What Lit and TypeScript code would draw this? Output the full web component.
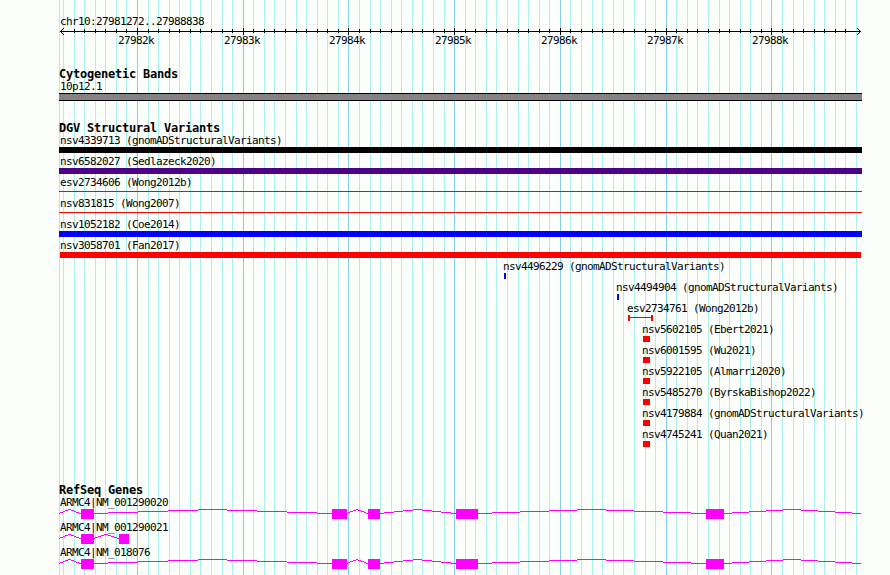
import { css, html, svg, LitElement } from 'lit';
import { customElement, property } from 'lit/decorators.js';

type Glyph = 'band' | 'bar' | 'line' | 'span';

interface Feature {
  label: string;
  left: number;
  right: number;
  color: string;
  glyph: Glyph;
  labelLeft?: number;
}

interface Gene {
  label: string;
  exons: [number, number][];
  end?: number;
}

const START = 27981272;
const STOP = 27988838;
const LEFT = 59;
const RIGHT = 862;

const BLACK = '#040204';
const PURPLE = '#4c0284';
const RED = '#ff0000';
const BLUE = '#0000ff';

/** Converts a base position to a panel pixel. */
const toPixel = (position: number) => Math.round(60 + ((position - START) * 800) / (STOP - START));

const TICKS: { x: number; position: number; major: boolean }[] = [];
for (let position = Math.ceil(START / 100) * 100; position <= STOP; position += 100) {
  TICKS.push({ x: toPixel(position), position, major: position % 1000 === 0 });
}

const BANDS: Feature[] = [
  { label: '10p12.1', left: LEFT, right: RIGHT, color: '#848284', glyph: 'band' },
];

const VARIANTS: Feature[] = [
  { label: 'nsv4339713 (gnomADStructuralVariants)', left: LEFT, right: RIGHT, color: BLACK, glyph: 'bar' },
  { label: 'nsv6582027 (Sedlazeck2020)', left: LEFT, right: RIGHT, color: PURPLE, glyph: 'bar' },
  { label: 'esv2734606 (Wong2012b)', left: LEFT, right: RIGHT, color: RED, glyph: 'line' },
  { label: 'nsv831815 (Wong2007)', left: LEFT, right: RIGHT, color: RED, glyph: 'line' },
  { label: 'nsv1052182 (Coe2014)', left: LEFT, right: RIGHT, color: BLUE, glyph: 'bar' },
  { label: 'nsv3058701 (Fan2017)', left: 60, right: 861, color: RED, glyph: 'bar' },
  { label: 'nsv4496229 (gnomADStructuralVariants)', left: 504, right: 506, color: BLUE, glyph: 'bar', labelLeft: 503 },
  { label: 'nsv4494904 (gnomADStructuralVariants)', left: 617, right: 619, color: BLUE, glyph: 'bar', labelLeft: 616 },
  { label: 'esv2734761 (Wong2012b)', left: 628, right: 653, color: RED, glyph: 'span', labelLeft: 627 },
  { label: 'nsv5602105 (Ebert2021)', left: 643, right: 650, color: RED, glyph: 'bar', labelLeft: 642 },
  { label: 'nsv6001595 (Wu2021)', left: 643, right: 650, color: RED, glyph: 'bar', labelLeft: 642 },
  { label: 'nsv5922105 (Almarri2020)', left: 643, right: 650, color: RED, glyph: 'bar', labelLeft: 642 },
  { label: 'nsv5485270 (ByrskaBishop2022)', left: 643, right: 650, color: RED, glyph: 'bar', labelLeft: 642 },
  { label: 'nsv4179884 (gnomADStructuralVariants)', left: 643, right: 650, color: RED, glyph: 'bar', labelLeft: 642 },
  { label: 'nsv4745241 (Quan2021)', left: 643, right: 650, color: RED, glyph: 'bar', labelLeft: 642 },
];

const LONG_EXONS: [number, number][] = [[81, 94], [332, 347], [368, 380], [456, 478], [706, 724]];

const GENES: Gene[] = [
  { label: 'ARMC4|NM_001290020', exons: LONG_EXONS, end: 861 },
  { label: 'ARMC4|NM_001290021', exons: [[81, 94], [119, 129]] },
  { label: 'ARMC4|NM_018076', exons: LONG_EXONS, end: 861 },
];

const textStyles = css`
  .label {
    font: 11px/13px 'DejaVu Sans Mono', monospace;
    letter-spacing: -0.622px;
    height: 13px;
    white-space: pre;
    color: #000000;
  }

  svg {
    display: block;
    shape-rendering: crispEdges;
  }
`;

/**
 * Scale bar with arrowheads, ticks and position labels.
 */
@customElement('genome-ruler')
export class GenomeRuler extends LitElement {
  static styles = [
    textStyles,
    css`
      :host {
        display: block;
      }

      .region {
        padding-left: 60px;
      }
    `,
  ];

  /** Arrowhead pixels, opening from the tip in the given direction. */
  private arrow(tip: number, direction: number) {
    return [-3, -2, -1, 1, 2, 3].map(dy => svg`
      <rect x=${tip + direction * Math.abs(dy)} y=${3 + dy} width="1" height="1" />
    `);
  }

  render() {
    // the outermost ticks give way to the arrowheads
    const ticks = TICKS.slice(1, -1);
    return html`
      <div class="label region">chr10:${START}..${STOP}</div>
      <svg width="890" height="19">
        <rect x="60" y="3" width="801" height="1" />
        ${this.arrow(60, 1)}
        ${this.arrow(860, -1)}
        ${ticks.map(({ x, position, major }) => svg`
          <rect x=${x} y=${major ? 0 : 1} width="1" height=${major ? 7 : 4} />
          ${major ? svg`<text class="label" x=${x - 19} y="16">${position / 1000}k</text>` : ''}
        `)}
      </svg>
    `;
  }
}

/**
 * One labelled feature.
 */
@customElement('genome-feature')
export class GenomeFeature extends LitElement {
  static styles = [
    textStyles,
    css`
      :host {
        display: block;
        height: 21px;
      }

      .glyph {
        box-sizing: border-box;
        height: 6px;
      }

      .band {
        height: 8px;
        border: solid #000000;
        border-width: 1px 0;
      }

      .line {
        height: 1px;
        margin-top: 2px;
      }

      .span {
        display: flex;
        align-items: flex-start;
      }

      .cap {
        width: 2px;
        height: 6px;
      }

      .stem {
        flex: 1;
        height: 1px;
        margin-top: 2px;
      }
    `,
  ];

  @property({ attribute: false }) feature!: Feature;

  render() {
    const { label, left, right, color, glyph, labelLeft = 60 } = this.feature;
    const place = `margin-left: ${left}px; width: ${right - left}px;`;
    const fill = `background: ${color}`;
    return html`
      <div class="label" style="padding-left: ${labelLeft}px">${label}</div>
      ${glyph === 'span'
        ? html`
          <div class="glyph span" style=${place}>
            <div class="cap" style=${fill}></div>
            <div class="stem" style=${fill}></div>
            <div class="cap" style=${fill}></div>
          </div>`
        : html`<div class="glyph ${glyph}" style="${place} ${fill}"></div>`}
    `;
  }
}

/**
 * Exon boxes joined by hat shaped introns.
 */
@customElement('genome-gene')
export class GenomeGene extends LitElement {
  static styles = [
    textStyles,
    css`
      :host {
        display: block;
        height: 25px;
      }

      .label {
        padding-left: 60px;
      }

      .exon,
      .intron {
        fill: #ff00ff;
      }
    `,
  ];

  @property({ attribute: false }) gene!: Gene;

  /** Climbs four pixels to the middle and back down, one flat run per level. */
  private intron(from: number, to: number) {
    const step = (to - from) / 8;
    const edges = [from];
    for (let i = 0; i < 8; i++) {
      edges.push(Math.floor(from + (i + 0.5) * step));
    }
    edges.push(to);
    return edges.slice(1).map((edge, i) => svg`
      <rect class="intron" x=${edges[i]} y=${Math.abs(4 - i)} width=${edge - edges[i]} height="1" />
    `);
  }

  render() {
    const { label, exons, end } = this.gene;
    return html`
      <div class="label">${label}</div>
      <svg width="890" height="10">
        ${exons.map(([from], i) => this.intron(i ? exons[i - 1][1] : LEFT, from))}
        ${end ? this.intron(exons[exons.length - 1][1], end) : ''}
        ${exons.map(([from, to]) => svg`<rect class="exon" x=${from} y="0" width=${to - from} height="10" />`)}
      </svg>
    `;
  }
}

@customElement('app-root')
export class AppRoot extends LitElement {
  static styles = css`
    :host {
      display: block;
      position: relative;
      width: 890px;
      height: 575px;
      overflow: hidden;
      background: #fcfefc;
    }

    .grid {
      position: absolute;
      inset: 0;
      shape-rendering: crispEdges;
      fill: #acf0ec;
    }

    .grid .major {
      fill: #84ceec;
    }

    .panel {
      position: relative;
      display: flex;
      flex-direction: column;
      padding-top: 15px;
    }

    .bands {
      padding-top: 20px;
      height: 34px;
    }

    .variants {
      padding-top: 20px;
      height: 342px;
    }

    .genes {
      padding-top: 20px;
    }

    h2 {
      margin: 0;
      padding-left: 59px;
      height: 13px;
      font: bold 12px/14px 'DejaVu Sans Mono', monospace;
      letter-spacing: -0.224px;
      color: #000000;
    }
  `;

  render() {
    return html`
      <svg class="grid" width="890" height="575">
        <rect x=${LEFT} y="0" width="1" height="575" />
        ${TICKS.map(({ x, major }) => svg`<rect class=${major ? 'major' : 'minor'} x=${x} y="0" width="1" height="575" />`)}
      </svg>
      <div class="panel">
        <genome-ruler></genome-ruler>
        <section class="bands">
          <h2>Cytogenetic Bands</h2>
          ${BANDS.map(feature => html`<genome-feature .feature=${feature}></genome-feature>`)}
        </section>
        <section class="variants">
          <h2>DGV Structural Variants</h2>
          ${VARIANTS.map(feature => html`<genome-feature .feature=${feature}></genome-feature>`)}
        </section>
        <section class="genes">
          <h2>RefSeq Genes</h2>
          ${GENES.map(gene => html`<genome-gene .gene=${gene}></genome-gene>`)}
        </section>
      </div>
    `;
  }
}
